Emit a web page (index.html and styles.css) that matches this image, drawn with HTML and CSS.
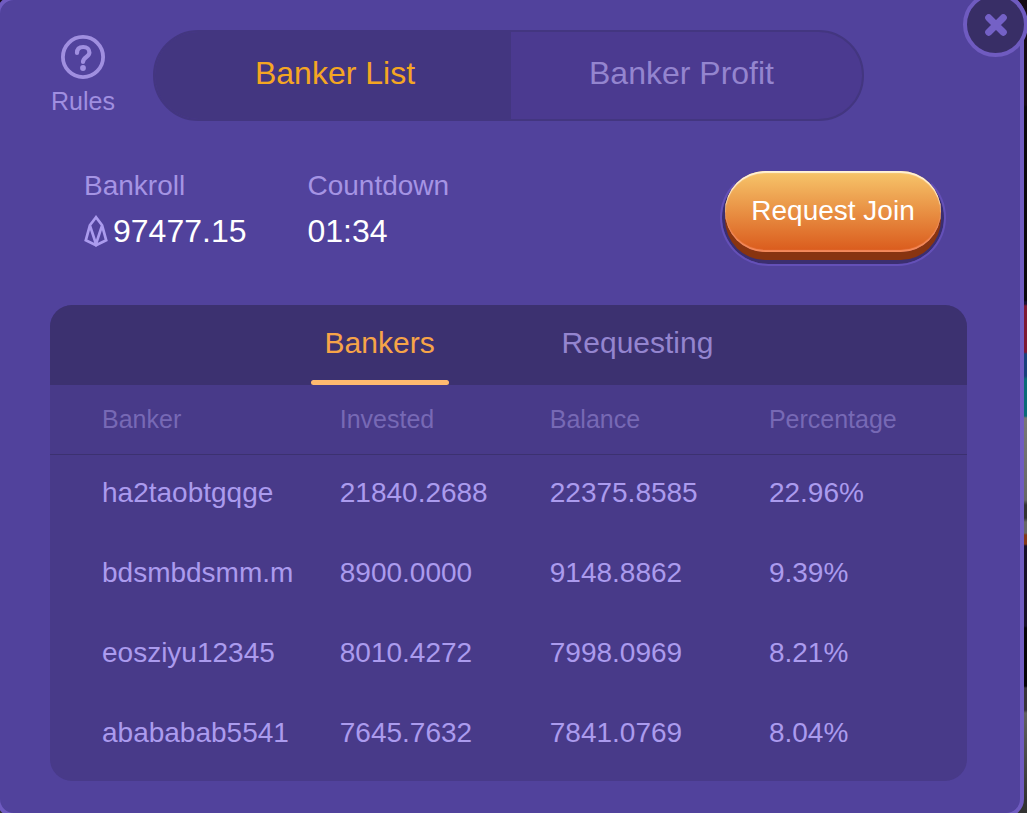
FILE: index.html
```html
<!DOCTYPE html>
<html lang="en">
<head>
<meta charset="utf-8">
<title>Banker List</title>
<meta name="viewport" content="width=device-width, initial-scale=1">
<link rel="stylesheet" href="styles.css">
</head>
<body>
<main class="modal">
  <button class="close" type="button" aria-label="Close">
    <svg width="22" height="22" viewBox="0 0 22 22" aria-hidden="true"><path d="M3.7 3.7 18.3 18.3M18.3 3.7 3.7 18.3" fill="none" stroke="currentColor" stroke-width="7" stroke-linecap="round"/></svg>
  </button>
  <header class="top">
    <button class="rules" type="button">
      <svg width="44" height="44" viewBox="0 0 44 44" fill="none" aria-hidden="true">
        <circle cx="22" cy="22" r="20.1" stroke="currentColor" stroke-width="3.8"/>
        <path d="M16 18C16 14 18.400 12 22.200 12C26 12 28.400 14.200 28.400 17.500C28.400 22 22 22 22 27" stroke="currentColor" stroke-width="4.200" stroke-linecap="round"/>
        <circle cx="22" cy="33" r="2.900" fill="currentColor"/>
      </svg>
      <span>Rules</span>
    </button>
    <nav class="switch" aria-label="Views">
      <button class="switch-item active" type="button">Banker List</button>
      <button class="switch-item" type="button">Banker Profit</button>
    </nav>
  </header>
  <section class="summary">
    <dl class="stats">
      <div class="stat">
        <dt>Bankroll</dt>
        <dd>
          <svg width="24" height="32" viewBox="0 0 24 32" fill="none" aria-hidden="true"><path d="M12 2.200 5.900 10.300 1.800 25.300 12 30.200 22.200 25.300 18.100 10.300ZM5.900 10.300 12 29 18.100 10.300" stroke="currentColor" stroke-width="2.700"/></svg>
          <span>97477.15</span>
        </dd>
      </div>
      <div class="stat">
        <dt>Countdown</dt>
        <dd><span>01:34</span></dd>
      </div>
    </dl>
    <button class="join" type="button"><span>Request Join</span></button>
  </section>
  <section class="panel">
    <nav class="tabs" aria-label="Banker groups">
      <button class="tab active" type="button">Bankers</button>
      <button class="tab" type="button">Requesting</button>
    </nav>
    <table class="bankers">
      <thead><tr><th scope="col">Banker</th><th scope="col">Invested</th><th scope="col">Balance</th><th scope="col">Percentage</th></tr></thead>
      <tbody>
        <tr><td>ha2taobtgqge</td><td>21840.2688</td><td>22375.8585</td><td>22.96%</td></tr>
        <tr><td>bdsmbdsmm.m</td><td>8900.0000</td><td>9148.8862</td><td>9.39%</td></tr>
        <tr><td>eosziyu12345</td><td>8010.4272</td><td>7998.0969</td><td>8.21%</td></tr>
        <tr><td>abababab5541</td><td>7645.7632</td><td>7841.0769</td><td>8.04%</td></tr>
      </tbody>
    </table>
  </section>
</main>
</body>
</html>
```
FILE: styles.css
```css
* { box-sizing: border-box; }

body {
  margin: 0;
  min-height: 100vh;
  display: flex;
  overflow: hidden;
  font-family: "Liberation Sans", Arial, sans-serif;
  background: linear-gradient(#160b14 0 105px, #0b080d 107px 300px, #1a1233 302px, #1a1233 304px, #7c1834 306px 352px, #19407c 354px 376px, #0b6b78 379px 416px, #777 418px, #666 500px, #333 505px 518px, #666 522px 533px, #823818 535px 544px, #171029 546px 626px, #050307 628px 686px, #38333a 688px 710px, #606060 713px, #333 800px);
}

button {
  padding: 0;
  border: 0;
  background: none;
  font: inherit;
  color: inherit;
  cursor: pointer;
}

/* The frame bleeds past the top, left and bottom of the window */
.modal {
  position: relative;
  flex: 1;
  margin: -4px 3px -4px -4px;
  padding: 30px 53px 32px 50px;
  border: 4px solid #6f5bc0;
  border-radius: 18px;
  background: #51429c;
}

.close {
  position: absolute;
  top: -8px;
  right: -8px;
  width: 65px;
  height: 65px;
  display: grid;
  place-items: center;
  border: 4px solid #6f5bc0;
  border-radius: 50%;
  background: #382e66;
  color: #7461c6;
}

.top {
  display: flex;
  gap: 37px;
}

.rules {
  display: flex;
  flex-direction: column;
  align-items: center;
  gap: 7px;
  padding-top: 5px;
  width: 66px;
  height: 91px;
  font-size: 25px;
  line-height: 30px;
  color: #a08fe0;
}

.switch {
  flex: 1;
  display: flex;
  max-width: 711px;
  height: 91px;
  border: 2px solid #433680;
  border-radius: 46px;
  overflow: hidden;
  background: #4b3a90;
  font-size: 32px;
  color: #9485cf;
}

.switch-item { flex: 1; padding: 0 10px 4px 0; }
.switch-item.active { flex: 0 0 356px; padding: 0 0 4px 4px; background: #433680; color: #f5a623; }

.summary {
  display: flex;
  align-items: flex-start;
  justify-content: space-between;
  padding: 48px 21px 39px 34px;
}

.stats {
  display: flex;
  gap: 61px;
  margin: 0;
  padding-top: 1px;
}

.stat dt { font-size: 28px; line-height: 32px; color: #a594e4; }
.stat dd {
  display: flex;
  align-items: center;
  gap: 5px;
  margin: 10px 0 0;
  font-size: 32px;
  line-height: 38px;
  color: #fff;
}
.stat svg { color: #ab9bee; }

.join {
  display: flex;
  width: 226px;
  height: 97px;
  padding: 0 3px;
  border: 2px solid #6450b8;
  border-top-color: transparent;
  border-radius: 49px;
  background: #3b2e70;
  background-clip: padding-box;
  font-size: 28px;
  color: #fff;
}
.join span {
  flex: 1;
  height: 81px;
  border-radius: 41px;
  line-height: 80px;
  background: linear-gradient(#f7c66b, #da5a1c);
  box-shadow: inset 0 2px 1px #fff2d8, inset 0 -2px 1px #f48a5c, 0 8px 0 #883410;
}

.panel {
  padding-bottom: 7px;
  border-radius: 22px;
  overflow: hidden;
  background: #483a89;
}

.tabs {
  display: flex;
  justify-content: center;
  gap: 113px;
  height: 80px;
  padding-left: 7px;
  background: #3c3170;
  font-size: 30px;
  color: #9485cf;
}

.tab {
  height: 80px;
  border-bottom: 5px solid transparent;
}
.tab.active { position: relative; width: 138px; color: #f7a448; }
.tab.active::after {
  content: "";
  position: absolute;
  right: 0;
  bottom: -5px;
  left: 0;
  height: 5px;
  border-radius: 3px;
  background: #ffb96f;
}

.bankers {
  width: 100%;
  border-collapse: collapse;
  table-layout: fixed;
  font-size: 28px;
  color: #ab9bee;
}
.bankers th, .bankers td { padding: 0; text-align: left; }
.bankers th {
  height: 69px;
  border-bottom: 1px solid #3c3170;
  font-size: 25px;
  font-weight: 400;
  color: #7769b5;
}
.bankers td { height: 80px; padding-bottom: 2px; }
.bankers th:first-child { width: 31.6%; }
.bankers th:nth-child(2) { width: 22.9%; }
.bankers th:nth-child(3) { width: 23.9%; }
.bankers tr > :first-child { padding-left: 52px; }
```
